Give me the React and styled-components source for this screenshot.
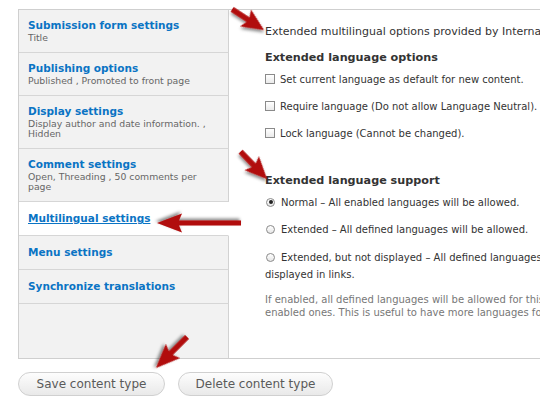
import React from "react";
import styled, { createGlobalStyle } from "styled-components";

const Global = createGlobalStyle`
  html, body { margin: 0; padding: 0; background: #fff; overflow: hidden; }
  body { width: 540px; height: 408px; font-family: "DejaVu Sans", Verdana, sans-serif; color: #333; }
`;

const Page = styled.div`
  position: relative;
  width: 540px;
  height: 408px;
  overflow: hidden;
  padding: 9px 0 0 18px;
  box-sizing: border-box;
`;

const Frame = styled.div`
  display: flex;
  width: 620px;
  height: 350px;
  border: 1px solid #cfcfcf;
  box-sizing: border-box;
`;

const Tabs = styled.div`
  width: 210px;
  flex: none;
  display: flex;
  flex-direction: column;
  background: #f2f2f2;
`;

const Tab = styled.div`
  padding: ${(p) => (p.$single ? "10px 14px 10px 9px" : "9px 14px 9px 9px")};
  border-bottom: 1px solid #d6d6d6;
  border-right: 1px solid ${(p) => (p.$selected ? "transparent" : "#d2d2d2")};
  background: ${(p) => (p.$selected ? "#fff" : "#f2f2f2")};
`;

const TabTitle = styled.div`
  font-size: 10.5px;
  font-weight: bold;
  line-height: 13px;
  color: #0a74c4;
  text-decoration: ${(p) => (p.$selected ? "underline" : "none")};
`;

const TabSummary = styled.div`
  font-size: 9.3px;
  line-height: 10px;
  color: #666;
  margin-top: 1px;
`;

const Filler = styled.div`
  flex: 1;
  border-right: 1px solid #d2d2d2;
`;

const Main = styled.div`
  flex: 1;
  padding: 14px 0 0 36px;
  background: #fff;
  overflow: hidden;
`;

const Intro = styled.div`
  font-size: 11px;
  line-height: 16px;
  color: #333;
  white-space: nowrap;
`;

const Heading = styled.div`
  font-size: 11.2px;
  font-weight: bold;
  line-height: 16px;
  color: #333;
  margin-top: ${(p) => p.$mt}px;
  margin-bottom: 5px;
`;

const OptionRow = styled.div`
  display: flex;
  align-items: center;
  height: 16px;
  margin-bottom: ${(p) => p.$mb ?? 11}px;
  font-size: 10px;
  color: #333;
  white-space: nowrap;
`;

const WrapOption = styled.div`
  font-size: 10px;
  line-height: 17px;
  color: #333;
  white-space: nowrap;
  margin-bottom: 10px;
`;

const Check = styled.span`
  display: inline-block;
  width: 8px;
  height: 8px;
  border: 1px solid #8a8a8a;
  background: linear-gradient(#fff, #eaeaea);
  flex: none;
  margin-right: 5px;
`;

const Radio = styled.span`
  display: inline-block;
  position: relative;
  width: 7px;
  height: 7px;
  border: 1px solid #8a8a8a;
  border-radius: 50%;
  background: linear-gradient(#fff, #e6e6e6);
  flex: none;
  vertical-align: -1px;
  margin: 0 6px 0 1px;
  &::after {
    content: "";
    display: ${(p) => (p.$on ? "block" : "none")};
    position: absolute;
    left: 1.5px;
    top: 1.5px;
    width: 4px;
    height: 4px;
    border-radius: 50%;
    background: #222;
  }
`;

const Description = styled.div`
  font-size: 10px;
  line-height: 13px;
  color: #777;
  white-space: nowrap;
`;

const Actions = styled.div`
  display: flex;
  gap: 13px;
  margin-top: 13px;
`;

const Button = styled.button`
  height: 24px;
  width: ${(p) => p.$w}px;
  border: 1px solid #d0d0d0;
  border-radius: 12px;
  background: linear-gradient(#fdfdfd, #e9e9e9);
  font-family: "DejaVu Sans", Verdana, sans-serif;
  font-size: 12px;
  color: #5a5a5a;
  padding: 0;
`;

const Overlay = styled.svg`
  position: absolute;
  left: 0;
  top: 0;
  pointer-events: none;
`;

function Arrow({ x, y, angle, len, head = 24, hw = 10, sw = 2.8 }) {
  const pts = [
    [0, 0],
    [-head, -hw],
    [-head + 3, -sw],
    [-len, -sw],
    [-len, sw],
    [-head + 3, sw],
    [-head, hw],
  ]
    .map((p) => p.join(","))
    .join(" ");
  return (
    <polygon
      points={pts}
      fill="#b10a0a"
      transform={`translate(${x} ${y}) rotate(${angle})`}
      filter="url(#sh)"
    />
  );
}

const tabs = [
  { title: "Submission form settings", summary: "Title" },
  { title: "Publishing options", summary: "Published , Promoted to front page" },
  { title: "Display settings", summary: "Display author and date information. , Hidden" },
  { title: "Comment settings", summary: "Open, Threading , 50 comments per page" },
  { title: "Multilingual settings", selected: true },
  { title: "Menu settings" },
  { title: "Synchronize translations" },
];

export default function App() {
  return (
    <Page>
      <Global />
      <Frame>
        <Tabs>
          {tabs.map((t) => (
            <Tab key={t.title} $selected={t.selected} $single={!t.summary}>
              <TabTitle $selected={t.selected}>{t.title}</TabTitle>
              {t.summary && <TabSummary>{t.summary}</TabSummary>}
            </Tab>
          ))}
          <Filler />
        </Tabs>
        <Main>
          <Intro>Extended multilingual options provided by Internationalization module.</Intro>
          <Heading $mt={10}>Extended language options</Heading>
          <OptionRow><Check />Set current language as default for new content.</OptionRow>
          <OptionRow><Check />Require language (Do not allow Language Neutral).</OptionRow>
          <OptionRow><Check />Lock language (Cannot be changed).</OptionRow>
          <Heading $mt={32}>Extended language support</Heading>
          <OptionRow $mb={11}><Radio $on />Normal – All enabled languages will be allowed.</OptionRow>
          <OptionRow $mb={12}><Radio />Extended – All defined languages will be allowed.</OptionRow>
          <WrapOption>
            <Radio />Extended, but not displayed – All defined languages will be allowed for input, but not
            <br />
            displayed in links.
          </WrapOption>
          <Description>
            If enabled, all defined languages will be allowed for this content type in addition to only
            <br />
            enabled ones. This is useful to have more languages for content than for the interface.
          </Description>
        </Main>
      </Frame>
      <Actions>
        <Button $w={147}>Save content type</Button>
        <Button $w={155}>Delete content type</Button>
      </Actions>
      <Overlay width="540" height="408" viewBox="0 0 540 408">
        <defs>
          <filter id="sh" x="-30%" y="-30%" width="160%" height="160%">
            <feDropShadow dx="1.5" dy="2" stdDeviation="1.5" floodColor="#000" floodOpacity="0.45" />
          </filter>
        </defs>
        <Arrow x={264} y={30} angle={33} len={38} head={22} hw={10} />
        <Arrow x={157} y={223} angle={180} len={84} head={25} hw={9.5} sw={2.6} />
        <Arrow x={267} y={179} angle={46} len={38} head={22} hw={10} />
        <Arrow x={156} y={368} angle={135} len={44} head={24} hw={10} />
      </Overlay>
    </Page>
  );
}
